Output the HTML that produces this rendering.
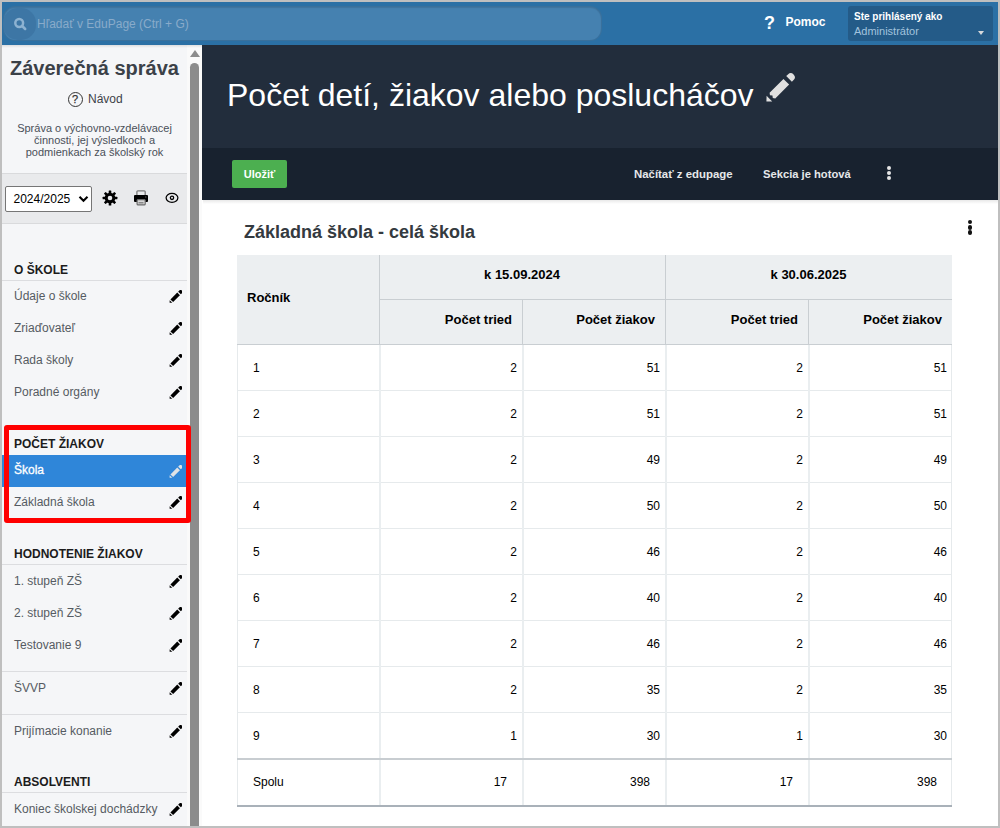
<!DOCTYPE html>
<html><head><meta charset="utf-8">
<style>
*{margin:0;padding:0;box-sizing:border-box}
html,body{width:1000px;height:828px;overflow:hidden;background:#fff;font-family:"Liberation Sans",sans-serif}
.a{position:absolute}
#bl{left:0;top:0;width:2px;height:828px;background:#bfbfbf}
#br{left:998px;top:0;width:2px;height:828px;background:#bfbfbf}
#bt{left:0;top:0;width:1000px;height:2px;background:#bfbfbf}
#bb{left:0;top:826px;width:1000px;height:2px;background:#bfbfbf}
/* top bar */
#top{left:2px;top:2px;width:996px;height:43px;background:#2b70a5}
#search{left:3px;top:6px;width:599px;height:35px;border-radius:12px;background:#4581b0;border:1px solid rgba(35,80,120,.35);box-shadow:inset 0 1px 1px rgba(0,0,0,.10)}
#sicon{left:3px;top:8px;width:33px;height:32px;border-radius:15px;background:#3d76a5}
#stext{left:37px;top:17px;font-size:12px;color:#89abca}
#helpq{left:764px;top:13px;font-size:18px;line-height:20px;color:#fff;font-weight:bold}
#help{left:785.5px;top:15px;line-height:14px;font-size:12px;color:#fff;font-weight:bold}
#user{left:848px;top:6px;width:145px;height:35px;border-radius:3px;background:#245b88}
#u1{left:854px;top:11px;font-size:10px;font-weight:bold;color:#fff}
#u2{left:854px;top:25px;font-size:11px;color:#a2c3de}
#car{left:978px;top:30.5px;width:0;height:0;border-left:3.75px solid transparent;border-right:3.75px solid transparent;border-top:4px solid #d6d9dc}
/* sidebar */
#hsh{left:2px;top:45px;width:200px;height:3px;background:linear-gradient(rgba(0,0,0,.10),rgba(0,0,0,0))}
#side{left:2px;top:45px;width:185px;height:781px;background:#f5f6f8}
#track{left:187px;top:45px;width:15px;height:781px;background:#fafafa}
#thumb{left:190px;top:63px;width:9px;height:763px;background:#8c8c8c;border-radius:4.5px 4.5px 0 0}
#arrow{left:189.5px;top:49.8px;width:0;height:0;border-left:5px solid transparent;border-right:5px solid transparent;border-bottom:7px solid #8c8c8c}
#stitle{left:2px;width:185px;text-align:center;top:57px;font-size:20px;font-weight:bold;color:#3b4148;line-height:23px}
#qc{left:67.5px;top:91.5px;width:15px;height:15px;border:1px solid #333;border-radius:50%}
#qm{left:67.5px;top:92.5px;width:15px;text-align:center;font-size:11px;color:#333;line-height:13px;-webkit-text-stroke:0.25px #333}
#navod{left:88px;top:92px;font-size:12px;color:#3d4248;line-height:14px}
#sdesc{left:2px;width:185px;top:122px;text-align:center;font-size:11px;line-height:12px;color:#4a5058}
#tools{left:2px;top:173px;width:185px;height:51px;background:#e9eaec;border-top:1px solid #d9dadc;border-bottom:1px solid #d9dadc}
#sel{left:5px;top:186px;width:87px;height:26px;border:1px solid #767676;border-radius:2px;background:#fff}
#selt{left:13.5px;top:192px;font-size:12px;color:#000;line-height:15px}
.sec{left:14px;font-size:12px;font-weight:bold;color:#1c1c1c;line-height:14px}
.sep{left:2px;width:185px;height:1px;background:#dcdde0}
.it{left:14px;font-size:12px;color:#555b62;line-height:14px}
.pen{left:168.75px}
#active{left:2px;top:455px;width:185px;height:32px;background:#2f86d9}
#red{left:4px;top:425px;width:187px;height:98px;border:5px solid #f00;border-radius:3px}
/* main */
#hdr{left:202px;top:45px;width:796px;height:103px;background:#222d3c}
#h1{left:227px;top:77px;font-size:32px;color:#fff;line-height:37px}
#bar{left:202px;top:148px;width:796px;height:52px;background:#18222f}
#shadow{left:203px;top:200px;width:795px;height:4px;background:linear-gradient(rgba(0,0,0,.09),rgba(0,0,0,0))}
#save{left:232px;top:160px;width:55px;height:28px;background:#4caf50;border-radius:2px;color:#fff;font-size:11px;font-weight:bold;text-align:center;line-height:28px}
.btx{top:166.5px;font-size:11.4px;font-weight:bold;color:#e6e8ea;line-height:14px}
#h2{left:244px;top:222px;font-size:18px;font-weight:bold;color:#343a40;line-height:21px}
/* table */
.th{background:#eceff1}
.hl{background:#c9ced2}
.bl{background:#e6eaec}
.tx{font-size:13px;font-weight:bold;color:#000;line-height:15px}
.td{font-size:12px;color:#000;line-height:14px}
</style></head><body>
<div class="a" id="top"></div>
<div class="a" id="search"></div>
<div class="a" id="sicon"><svg width="33" height="32" viewBox="0 2 33 32"><circle cx="16.2" cy="17" r="3.9" fill="none" stroke="#8db2d1" stroke-width="2.5"/><line x1="19.2" y1="20" x2="22.2" y2="23" stroke="#8db2d1" stroke-width="2.5" stroke-linecap="round"/></svg></div>
<div class="a" id="stext">Hľadať v EduPage (Ctrl + G)</div>
<div class="a" id="helpq">?</div><div class="a" id="help">Pomoc</div>
<div class="a" id="user"></div>
<div class="a" id="u1">Ste prihlásený ako</div>
<div class="a" id="u2">Administrátor</div>
<div class="a" id="car"></div>

<div class="a" id="side"></div>
<div class="a" id="track"></div><div class="a" id="arrow"></div><div class="a" id="thumb"></div>
<div class="a" id="hsh"></div>
<div class="a" id="stitle">Záverečná správa</div>
<div class="a" id="qc"></div><div class="a" id="qm">?</div>
<div class="a" id="navod">Návod</div>
<div class="a" id="sdesc">Správa o výchovno-vzdelávacej<br>činnosti, jej výsledkoch a<br>podmienkach za školský rok</div>
<div class="a" id="tools"></div>
<div class="a" id="sel"></div>
<div class="a" id="selt">2024/2025</div>
<svg class="a" style="left:78px;top:195px" width="11" height="8" viewBox="0 0 11 8"><path d="M1.5,1.8 L5.5,5.8 L9.5,1.8" fill="none" stroke="#000" stroke-width="2.1"/></svg>


<svg class="a" style="left:102px;top:190px" width="16" height="16" viewBox="0 0 16 16"><g fill="#000"><circle cx="8" cy="8" r="5.3"/>
<rect x="6.7" y="0.6" width="2.6" height="14.8" rx="0.5"/><rect x="6.7" y="0.6" width="2.6" height="14.8" rx="0.5" transform="rotate(45 8 8)"/><rect x="6.7" y="0.6" width="2.6" height="14.8" rx="0.5" transform="rotate(90 8 8)"/><rect x="6.7" y="0.6" width="2.6" height="14.8" rx="0.5" transform="rotate(135 8 8)"/></g><circle cx="8" cy="8" r="2.3" fill="#e9eaec"/></svg>
<svg class="a" style="left:133px;top:189px" width="16" height="17" viewBox="0 0 16 17"><rect x="3.9" y="1.8" width="8.3" height="5" rx="1" fill="none" stroke="#7a7a7a" stroke-width="1.3"/><rect x="1" y="6" width="14" height="7" rx="1" fill="#000"/><rect x="4.1" y="10.6" width="8.1" height="5.3" rx="1" fill="#d8d8d8" stroke="#6a6a6a" stroke-width="1.2"/><rect x="5.5" y="13" width="5" height="1.5" fill="#888"/><circle cx="12.8" cy="8" r="0.7" fill="#555"/></svg>
<svg class="a" style="left:165px;top:192px" width="14" height="12" viewBox="0 0 14 12"><ellipse cx="7" cy="5.85" rx="5.9" ry="4.55" fill="none" stroke="#000" stroke-width="1.25"/><circle cx="7" cy="5.85" r="1.65" fill="none" stroke="#000" stroke-width="1.3"/></svg>
<div class="a sec" style="top:263px">O ŠKOLE</div>
<div class="a sep" style="top:280px"></div>
<div class="a it" style="top:289px">Údaje o škole</div>
<svg class="a pen" style="top:289.75px" width="13.5" height="13.5" viewBox="0 0 30 30"><g transform="translate(15,15) rotate(-45)" fill="#000"><path d="M-19.2,0 L-15,-4.2 L-15,4.2 Z"/><path d="M-12.5,-4.2 H8.9 V4.2 H-12.5 Z"/><path d="M11.8,-4.2 H15.2 A4.2,4.2 0 0 1 15.2,4.2 H11.8 Z"/></g></svg>
<div class="a it" style="top:321px">Zriaďovateľ</div>
<svg class="a pen" style="top:321.75px" width="13.5" height="13.5" viewBox="0 0 30 30"><g transform="translate(15,15) rotate(-45)" fill="#000"><path d="M-19.2,0 L-15,-4.2 L-15,4.2 Z"/><path d="M-12.5,-4.2 H8.9 V4.2 H-12.5 Z"/><path d="M11.8,-4.2 H15.2 A4.2,4.2 0 0 1 15.2,4.2 H11.8 Z"/></g></svg>
<div class="a it" style="top:353px">Rada školy</div>
<svg class="a pen" style="top:353.75px" width="13.5" height="13.5" viewBox="0 0 30 30"><g transform="translate(15,15) rotate(-45)" fill="#000"><path d="M-19.2,0 L-15,-4.2 L-15,4.2 Z"/><path d="M-12.5,-4.2 H8.9 V4.2 H-12.5 Z"/><path d="M11.8,-4.2 H15.2 A4.2,4.2 0 0 1 15.2,4.2 H11.8 Z"/></g></svg>
<div class="a it" style="top:385px">Poradné orgány</div>
<svg class="a pen" style="top:385.75px" width="13.5" height="13.5" viewBox="0 0 30 30"><g transform="translate(15,15) rotate(-45)" fill="#000"><path d="M-19.2,0 L-15,-4.2 L-15,4.2 Z"/><path d="M-12.5,-4.2 H8.9 V4.2 H-12.5 Z"/><path d="M11.8,-4.2 H15.2 A4.2,4.2 0 0 1 15.2,4.2 H11.8 Z"/></g></svg>
<div class="a" id="active"></div>
<div class="a sec" style="top:437px">POČET ŽIAKOV</div>
<div class="a it" style="top:463px;color:#fff;-webkit-text-stroke:0.3px #fff">Škola</div>
<svg class="a pen" style="top:464.75px" width="13.5" height="13.5" viewBox="0 0 30 30"><g transform="translate(15,15) rotate(-45)" fill="#dfe3e6"><path d="M-19.2,0 L-15,-4.2 L-15,4.2 Z"/><path d="M-12.5,-4.2 H8.9 V4.2 H-12.5 Z"/><path d="M11.8,-4.2 H15.2 A4.2,4.2 0 0 1 15.2,4.2 H11.8 Z"/></g></svg>
<div class="a it" style="top:495px">Základná škola</div>
<svg class="a pen" style="top:495.75px" width="13.5" height="13.5" viewBox="0 0 30 30"><g transform="translate(15,15) rotate(-45)" fill="#000"><path d="M-19.2,0 L-15,-4.2 L-15,4.2 Z"/><path d="M-12.5,-4.2 H8.9 V4.2 H-12.5 Z"/><path d="M11.8,-4.2 H15.2 A4.2,4.2 0 0 1 15.2,4.2 H11.8 Z"/></g></svg>
<div class="a sec" style="top:547px">HODNOTENIE ŽIAKOV</div>
<div class="a sep" style="top:564px"></div>
<div class="a it" style="top:574px">1. stupeň ZŠ</div>
<svg class="a pen" style="top:574.75px" width="13.5" height="13.5" viewBox="0 0 30 30"><g transform="translate(15,15) rotate(-45)" fill="#000"><path d="M-19.2,0 L-15,-4.2 L-15,4.2 Z"/><path d="M-12.5,-4.2 H8.9 V4.2 H-12.5 Z"/><path d="M11.8,-4.2 H15.2 A4.2,4.2 0 0 1 15.2,4.2 H11.8 Z"/></g></svg>
<div class="a it" style="top:606px">2. stupeň ZŠ</div>
<svg class="a pen" style="top:606.75px" width="13.5" height="13.5" viewBox="0 0 30 30"><g transform="translate(15,15) rotate(-45)" fill="#000"><path d="M-19.2,0 L-15,-4.2 L-15,4.2 Z"/><path d="M-12.5,-4.2 H8.9 V4.2 H-12.5 Z"/><path d="M11.8,-4.2 H15.2 A4.2,4.2 0 0 1 15.2,4.2 H11.8 Z"/></g></svg>
<div class="a it" style="top:638px">Testovanie 9</div>
<svg class="a pen" style="top:638.75px" width="13.5" height="13.5" viewBox="0 0 30 30"><g transform="translate(15,15) rotate(-45)" fill="#000"><path d="M-19.2,0 L-15,-4.2 L-15,4.2 Z"/><path d="M-12.5,-4.2 H8.9 V4.2 H-12.5 Z"/><path d="M11.8,-4.2 H15.2 A4.2,4.2 0 0 1 15.2,4.2 H11.8 Z"/></g></svg>
<div class="a sep" style="top:671px"></div>
<div class="a it" style="top:681px">ŠVVP</div>
<svg class="a pen" style="top:681.75px" width="13.5" height="13.5" viewBox="0 0 30 30"><g transform="translate(15,15) rotate(-45)" fill="#000"><path d="M-19.2,0 L-15,-4.2 L-15,4.2 Z"/><path d="M-12.5,-4.2 H8.9 V4.2 H-12.5 Z"/><path d="M11.8,-4.2 H15.2 A4.2,4.2 0 0 1 15.2,4.2 H11.8 Z"/></g></svg>
<div class="a sep" style="top:714px"></div>
<div class="a it" style="top:724px">Prijímacie konanie</div>
<svg class="a pen" style="top:724.75px" width="13.5" height="13.5" viewBox="0 0 30 30"><g transform="translate(15,15) rotate(-45)" fill="#000"><path d="M-19.2,0 L-15,-4.2 L-15,4.2 Z"/><path d="M-12.5,-4.2 H8.9 V4.2 H-12.5 Z"/><path d="M11.8,-4.2 H15.2 A4.2,4.2 0 0 1 15.2,4.2 H11.8 Z"/></g></svg>
<div class="a sec" style="top:775px">ABSOLVENTI</div>
<div class="a sep" style="top:792px"></div>
<div class="a it" style="top:802px">Koniec školskej dochádzky</div>
<svg class="a pen" style="top:802.75px" width="13.5" height="13.5" viewBox="0 0 30 30"><g transform="translate(15,15) rotate(-45)" fill="#000"><path d="M-19.2,0 L-15,-4.2 L-15,4.2 Z"/><path d="M-12.5,-4.2 H8.9 V4.2 H-12.5 Z"/><path d="M11.8,-4.2 H15.2 A4.2,4.2 0 0 1 15.2,4.2 H11.8 Z"/></g></svg>
<div class="a" id="red"></div>

<div class="a" id="hdr"></div>
<div class="a" id="h1">Počet detí, žiakov alebo poslucháčov</div>
<div class="a" id="bar"></div>
<div class="a" id="shadow"></div>
<div class="a" id="save">Uložiť</div>
<div class="a btx" style="left:634px">Načítať z edupage</div>
<div class="a btx" style="left:763px;font-size:11.2px">Sekcia je hotová</div>
<div class="a" id="h2">Základná škola - celá škola</div>

<svg class="a" style="left:765px;top:72.5px" width="30" height="30" viewBox="0 0 30 30"><g transform="translate(15,15) rotate(-45)" fill="#e0e0e0"><path d="M-19.2,0 L-15,-4 L-15,4 Z"/><path d="M-10.7,-4 H8.9 V4 H-10.7 L-12.2,2 L-10.7,0 L-12.2,-2 Z"/><path d="M12.8,-4 H15.2 A4,4 0 0 1 15.2,4 H12.8 Z"/></g></svg><div class="a" style="left:886.8px;top:165.70000000000002px;width:4.2px;height:4.2px;border-radius:50%;background:#e6e6e6"></div><div class="a" style="left:886.8px;top:170.9px;width:4.2px;height:4.2px;border-radius:50%;background:#e6e6e6"></div><div class="a" style="left:886.8px;top:176.0px;width:4.2px;height:4.2px;border-radius:50%;background:#e6e6e6"></div><div class="a" style="left:967.8px;top:220.3px;width:4.2px;height:4.2px;border-radius:50%;background:#111"></div><div class="a" style="left:967.8px;top:225.4px;width:4.2px;height:4.2px;border-radius:50%;background:#111"></div><div class="a" style="left:967.8px;top:230.4px;width:4.2px;height:4.2px;border-radius:50%;background:#111"></div><div class="a th" style="left:237px;top:255px;width:715px;height:89px"></div>
<div class="a hl" style="left:379px;top:255px;width:1px;height:89px"></div>
<div class="a hl" style="left:665px;top:255px;width:1px;height:89px"></div>
<div class="a hl" style="left:522px;top:299px;width:1px;height:45px"></div>
<div class="a hl" style="left:808px;top:299px;width:1px;height:45px"></div>
<div class="a hl" style="left:379px;top:299px;width:573px;height:1px"></div>
<div class="a hl" style="left:237px;top:344px;width:715px;height:1px"></div>
<div class="a tx" style="left:247px;top:290px">Ročník</div>
<div class="a tx" style="left:379px;width:286px;text-align:center;top:267px">k 15.09.2024</div>
<div class="a tx" style="left:665px;width:287px;text-align:center;top:267px">k 30.06.2025</div>
<div class="a tx" style="left:379px;width:133px;text-align:right;top:312px">Počet tried</div>
<div class="a tx" style="left:522px;width:133px;text-align:right;top:312px">Počet žiakov</div>
<div class="a tx" style="left:665px;width:133px;text-align:right;top:312px">Počet tried</div>
<div class="a tx" style="left:808px;width:134px;text-align:right;top:312px">Počet žiakov</div>
<div class="a bl" style="left:237px;top:390px;width:715px;height:1px"></div>
<div class="a bl" style="left:237px;top:436px;width:715px;height:1px"></div>
<div class="a bl" style="left:237px;top:482px;width:715px;height:1px"></div>
<div class="a bl" style="left:237px;top:528px;width:715px;height:1px"></div>
<div class="a bl" style="left:237px;top:574px;width:715px;height:1px"></div>
<div class="a bl" style="left:237px;top:620px;width:715px;height:1px"></div>
<div class="a bl" style="left:237px;top:666px;width:715px;height:1px"></div>
<div class="a bl" style="left:237px;top:712px;width:715px;height:1px"></div>
<div class="a bl" style="left:237px;top:345px;width:1px;height:461px;background:#e6eaec"></div>
<div class="a bl" style="left:379px;top:345px;width:2px;height:461px;background:#eaeef0"></div>
<div class="a bl" style="left:522px;top:345px;width:2px;height:461px;background:#eaeef0"></div>
<div class="a bl" style="left:665px;top:345px;width:2px;height:461px;background:#eaeef0"></div>
<div class="a bl" style="left:808px;top:345px;width:2px;height:461px;background:#eaeef0"></div>
<div class="a bl" style="left:951px;top:345px;width:1px;height:461px;background:#e6eaec"></div>
<div class="a td" style="left:253px;top:361px">1</div>
<div class="a td" style="left:379px;width:138px;text-align:right;top:361px">2</div>
<div class="a td" style="left:522px;width:138px;text-align:right;top:361px">51</div>
<div class="a td" style="left:665px;width:138px;text-align:right;top:361px">2</div>
<div class="a td" style="left:808px;width:139px;text-align:right;top:361px">51</div>
<div class="a td" style="left:253px;top:407px">2</div>
<div class="a td" style="left:379px;width:138px;text-align:right;top:407px">2</div>
<div class="a td" style="left:522px;width:138px;text-align:right;top:407px">51</div>
<div class="a td" style="left:665px;width:138px;text-align:right;top:407px">2</div>
<div class="a td" style="left:808px;width:139px;text-align:right;top:407px">51</div>
<div class="a td" style="left:253px;top:453px">3</div>
<div class="a td" style="left:379px;width:138px;text-align:right;top:453px">2</div>
<div class="a td" style="left:522px;width:138px;text-align:right;top:453px">49</div>
<div class="a td" style="left:665px;width:138px;text-align:right;top:453px">2</div>
<div class="a td" style="left:808px;width:139px;text-align:right;top:453px">49</div>
<div class="a td" style="left:253px;top:499px">4</div>
<div class="a td" style="left:379px;width:138px;text-align:right;top:499px">2</div>
<div class="a td" style="left:522px;width:138px;text-align:right;top:499px">50</div>
<div class="a td" style="left:665px;width:138px;text-align:right;top:499px">2</div>
<div class="a td" style="left:808px;width:139px;text-align:right;top:499px">50</div>
<div class="a td" style="left:253px;top:545px">5</div>
<div class="a td" style="left:379px;width:138px;text-align:right;top:545px">2</div>
<div class="a td" style="left:522px;width:138px;text-align:right;top:545px">46</div>
<div class="a td" style="left:665px;width:138px;text-align:right;top:545px">2</div>
<div class="a td" style="left:808px;width:139px;text-align:right;top:545px">46</div>
<div class="a td" style="left:253px;top:591px">6</div>
<div class="a td" style="left:379px;width:138px;text-align:right;top:591px">2</div>
<div class="a td" style="left:522px;width:138px;text-align:right;top:591px">40</div>
<div class="a td" style="left:665px;width:138px;text-align:right;top:591px">2</div>
<div class="a td" style="left:808px;width:139px;text-align:right;top:591px">40</div>
<div class="a td" style="left:253px;top:637px">7</div>
<div class="a td" style="left:379px;width:138px;text-align:right;top:637px">2</div>
<div class="a td" style="left:522px;width:138px;text-align:right;top:637px">46</div>
<div class="a td" style="left:665px;width:138px;text-align:right;top:637px">2</div>
<div class="a td" style="left:808px;width:139px;text-align:right;top:637px">46</div>
<div class="a td" style="left:253px;top:683px">8</div>
<div class="a td" style="left:379px;width:138px;text-align:right;top:683px">2</div>
<div class="a td" style="left:522px;width:138px;text-align:right;top:683px">35</div>
<div class="a td" style="left:665px;width:138px;text-align:right;top:683px">2</div>
<div class="a td" style="left:808px;width:139px;text-align:right;top:683px">35</div>
<div class="a td" style="left:253px;top:729px">9</div>
<div class="a td" style="left:379px;width:138px;text-align:right;top:729px">1</div>
<div class="a td" style="left:522px;width:138px;text-align:right;top:729px">30</div>
<div class="a td" style="left:665px;width:138px;text-align:right;top:729px">1</div>
<div class="a td" style="left:808px;width:139px;text-align:right;top:729px">30</div>
<div class="a" style="background:#c8cdd1;left:237px;top:758px;width:715px;height:2px"></div>
<div class="a" style="background:#a9b1b9;left:237px;top:805px;width:715px;height:2px"></div>
<div class="a td" style="left:253px;top:774.5px">Spolu</div>
<div class="a td" style="left:379px;width:128px;text-align:right;top:774.5px">17</div>
<div class="a td" style="left:522px;width:128px;text-align:right;top:774.5px">398</div>
<div class="a td" style="left:665px;width:128px;text-align:right;top:774.5px">17</div>
<div class="a td" style="left:808px;width:129px;text-align:right;top:774.5px">398</div>

<div class="a" id="bl"></div><div class="a" id="br"></div><div class="a" id="bt"></div><div class="a" id="bb"></div>
</body></html>
